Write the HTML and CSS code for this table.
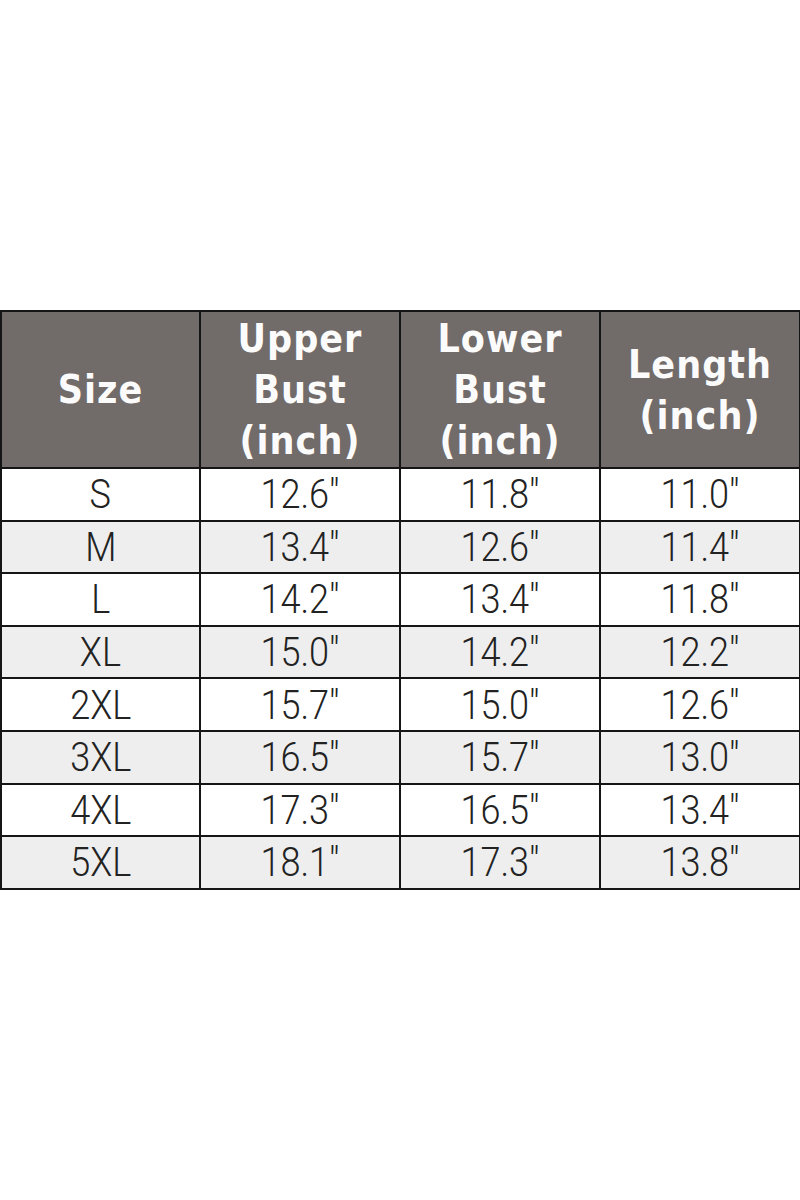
FILE: index.html
```html
<!DOCTYPE html>
<html lang="en">
<head>
<meta charset="utf-8">
<title>Size Chart</title>
<link rel="stylesheet" href="styles.css">
</head>
<body>
<main class="page">
  <table class="chart">
    <colgroup>
      <col class="col-first">
      <col class="col">
      <col class="col">
      <col class="col">
    </colgroup>
    <thead>
      <tr class="head-row">
        <th>Size</th>
        <th>Upper<br>Bust<br>(inch)</th>
        <th>Lower<br>Bust<br>(inch)</th>
        <th>Length<br>(inch)</th>
      </tr>
    </thead>
    <tbody>
      <tr><td><span class="v">S</span></td><td><span class="v">12.6"</span></td><td><span class="v">11.8"</span></td><td><span class="v">11.0"</span></td></tr>
      <tr><td><span class="v">M</span></td><td><span class="v">13.4"</span></td><td><span class="v">12.6"</span></td><td><span class="v">11.4"</span></td></tr>
      <tr><td><span class="v">L</span></td><td><span class="v">14.2"</span></td><td><span class="v">13.4"</span></td><td><span class="v">11.8"</span></td></tr>
      <tr><td><span class="v">XL</span></td><td><span class="v">15.0"</span></td><td><span class="v">14.2"</span></td><td><span class="v">12.2"</span></td></tr>
      <tr><td><span class="v">2XL</span></td><td><span class="v">15.7"</span></td><td><span class="v">15.0"</span></td><td><span class="v">12.6"</span></td></tr>
      <tr><td><span class="v">3XL</span></td><td><span class="v">16.5"</span></td><td><span class="v">15.7"</span></td><td><span class="v">13.0"</span></td></tr>
      <tr><td><span class="v">4XL</span></td><td><span class="v">17.3"</span></td><td><span class="v">16.5"</span></td><td><span class="v">13.4"</span></td></tr>
      <tr><td><span class="v">5XL</span></td><td><span class="v">18.1"</span></td><td><span class="v">17.3"</span></td><td><span class="v">13.8"</span></td></tr>
    </tbody>
  </table>
</main>
</body>
</html>
```
FILE: styles.css
```css
html, body {
  margin: 0;
  padding: 0;
  background: #ffffff;
}
.page {
  width: 800px;
  height: 1200px;
  overflow: hidden;
  padding-top: 310px;
  box-sizing: border-box;
}
.chart {
  border-collapse: collapse;
  table-layout: fixed;
  width: 801px;
}
.col-first {
  width: 199px;
}
.col {
  width: 200px;
}
.chart th,
.chart td {
  border: 2px solid #151515;
  padding: 0;
  text-align: center;
  vertical-align: middle;
}
.chart th {
  background: #716b6a;
  color: #fbfbfb;
  font-family: "DejaVu Sans Condensed", "DejaVu Sans", sans-serif;
  font-weight: bold;
  font-size: 39px;
  line-height: 51px;
  letter-spacing: 1px;
}
.head-row {
  height: 157px;
}
.chart tbody tr {
  height: 52.6px;
}
.chart td {
  color: #222222;
  font-family: Roboto, "DejaVu Sans", sans-serif;
  font-weight: 300;
  font-size: 41px;
  line-height: 48px;
}
.v {
  display: inline-block;
  transform: scaleX(0.88);
}
.chart tbody tr:nth-child(even) td {
  background: #eeeeee;
}
```
